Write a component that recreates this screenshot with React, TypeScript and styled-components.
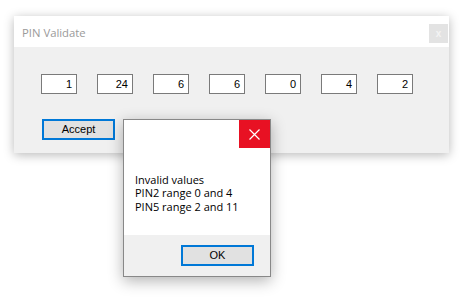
import { FC } from "react";
import styled, { createGlobalStyle } from "styled-components";

const GlobalStyle = createGlobalStyle`
  html, body {
    margin: 0;
    padding: 0;
    background: #ffffff;
  }
`;

const Stage = styled.div`
  position: relative;
  width: 475px;
  height: 301px;
  overflow: hidden;
  padding: 16px 0 0 14px;
  box-sizing: border-box;
`;

const Window = styled.div`
  width: 435px;
  height: 137px;
  background: #f0f0f0;
  box-shadow: 0 2px 10px rgba(0, 0, 0, 0.28);
  display: flex;
  flex-direction: column;
`;

const TitleBar = styled.div`
  height: 31px;
  background: #ffffff;
  display: flex;
  align-items: flex-start;
  padding: 0 1px 0 8px;
`;

const Title = styled.div`
  flex: 1;
  font-family: "Open Sans", "Noto Sans", sans-serif;
  font-size: 11.3px;
  color: #9a9a9a;
  line-height: 16px;
  padding-top: 9px;
`;

const TitleClose = styled.div`
  margin-top: 8px;
  width: 19px;
  height: 19px;
  background: #e3e3e3;
  color: #f3f3f3;
  font-family: "Liberation Sans", sans-serif;
  font-weight: bold;
  font-size: 10px;
  line-height: 19px;
  text-align: center;
`;

const Body = styled.div`
  padding: 27px 0 0 27px;
  display: flex;
  flex-direction: column;
  gap: 25px;
`;

const PinRow = styled.div`
  display: flex;
  gap: 20px;
`;

const PinBox = styled.div`
  width: 36px;
  height: 20px;
  box-sizing: border-box;
  border: 1px solid #7a7a7a;
  background: #ffffff;
  font-family: "Liberation Sans", Arial, sans-serif;
  font-size: 11px;
  line-height: 18px;
  text-align: right;
  padding-right: 4px;
  color: #000000;
`;

const Button = styled.div<{ width: number }>`
  width: ${(p) => p.width}px;
  height: 21px;
  box-sizing: border-box;
  border: 2px solid #0078d7;
  background: #e1e1e1;
  font-family: "Liberation Sans", Arial, sans-serif;
  font-size: 11px;
  line-height: 17px;
  text-align: center;
  color: #000000;
`;

const AcceptButton = styled(Button)`
  margin-left: 1px;
`;

const MessageBox = styled.div`
  position: absolute;
  left: 123px;
  top: 119px;
  width: 148px;
  height: 158px;
  box-sizing: border-box;
  border: 1px solid #888888;
  background: #ffffff;
  box-shadow: 0 4px 14px rgba(0, 0, 0, 0.3);
  display: flex;
  flex-direction: column;
`;

const MessageHeader = styled.div`
  height: 28px;
  display: flex;
  justify-content: flex-end;
`;

const RedClose = styled.div`
  width: 31px;
  height: 28px;
  background: #e81123;
  display: flex;
  align-items: center;
  justify-content: center;
`;

const MessageText = styled.div`
  flex: 1;
  padding: 25px 0 0 11px;
  font-family: "Open Sans", "Noto Sans", sans-serif;
  font-size: 11px;
  line-height: 13.3px;
  color: #000000;
`;

const MessageFooter = styled.div`
  height: 41px;
  background: #f0f0f0;
  display: flex;
  justify-content: flex-end;
  padding: 10px 16px 0 0;
  box-sizing: border-box;
`;

const pins = ["1", "24", "6", "6", "0", "4", "2"];

const CloseGlyph: FC = () => (
  <svg width="11" height="11" viewBox="0 0 11 11">
    <path d="M0.5 0.5 L10.5 10.5 M10.5 0.5 L0.5 10.5" stroke="#ffffff" strokeWidth="1.2" />
  </svg>
);

export default function App() {
  return (
    <>
      <GlobalStyle />
      <Stage>
        <Window>
          <TitleBar>
            <Title>PIN Validate</Title>
            <TitleClose>x</TitleClose>
          </TitleBar>
          <Body>
            <PinRow>
              {pins.map((v, i) => (
                <PinBox key={i}>{v}</PinBox>
              ))}
            </PinRow>
            <AcceptButton width={73}>Accept</AcceptButton>
          </Body>
        </Window>
        <MessageBox>
          <MessageHeader>
            <RedClose>
              <CloseGlyph />
            </RedClose>
          </MessageHeader>
          <MessageText>
            Invalid values
            <br />
            PIN2 range 0 and 4
            <br />
            PIN5 range 2 and 11
          </MessageText>
          <MessageFooter>
            <Button width={73}>OK</Button>
          </MessageFooter>
        </MessageBox>
      </Stage>
    </>
  );
}
